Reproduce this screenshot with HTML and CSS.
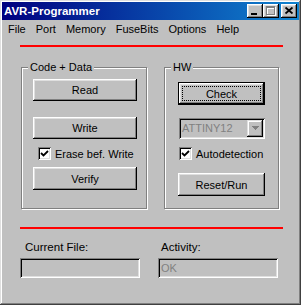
FILE: index.html
```html
<!DOCTYPE html>
<html lang="en">

<head>
    <meta charset="UTF-8">
    <title>AVR-Programmer</title>
    <link rel="stylesheet" href="styles.css">
</head>

<body>
    <div class="window">
        <div class="titlebar">
            <span class="title">AVR-Programmer</span>
            <div class="caption-btns">
                <span class="cbtn">
                    <svg width="16" height="14" shape-rendering="crispEdges">
                        <rect x="4" y="9" width="6" height="2" fill="#000" />
                    </svg>
                </span>
                <span class="cbtn">
                    <svg width="16" height="14" shape-rendering="crispEdges">
                        <path d="M4 3h9v9h-9z M5 5h7v6h-7z" fill="#fff" fill-rule="evenodd" />
                        <path d="M3 2h9v9h-9z M4 4h7v6h-7z" fill="#808080" fill-rule="evenodd" />
                    </svg>
                </span>
                <span class="cbtn close">
                    <svg width="16" height="14">
                        <path d="M4.5 3.5 L11.5 9.5 M11.5 3.5 L4.5 9.5" stroke="#000" stroke-width="1.7" />
                    </svg>
                </span>
            </div>
        </div>

        <div class="menubar">
            <span>File</span>
            <span>Port</span>
            <span>Memory</span>
            <span>FuseBits</span>
            <span>Options</span>
            <span>Help</span>
        </div>

        <div class="client">
            <div class="redline"></div>

            <div class="groups">
                <div class="group code">
                    <span class="legend">Code + Data</span>
                    <button class="btn">Read</button>
                    <button class="btn write">Write</button>
                    <label class="check erase"><span class="box"><svg width="9" height="9">
                                <path d="M1 4 L3.5 6.5 L8 2" stroke="#000" stroke-width="1.8" fill="none" />
                            </svg></span>Erase bef. Write</label>
                    <button class="btn verify">Verify</button>
                </div>

                <div class="group hw">
                    <span class="legend">HW</span>
                    <button class="btn default">Check</button>
                    <div class="combo">
                        <span class="combo-text">ATTINY12</span>
                        <span class="combo-arrow"><svg width="7" height="5" shape-rendering="crispEdges">
                                <path d="M1 1h5v1h-1v1h-1v1h-1v-1h-1v-1h-1z" fill="#fff" />
                                <path d="M0 0h7v1h-1v1h-1v1h-1v1h-1v-1h-1v-1h-1v-1h-1z" fill="#808080" />
                            </svg></span>
                    </div>
                    <label class="check auto"><span class="box"><svg width="9" height="9">
                                <path d="M1 4 L3.5 6.5 L8 2" stroke="#000" stroke-width="1.8" fill="none" />
                            </svg></span>Autodetection</label>
                    <button class="btn reset">Reset/Run</button>
                </div>
            </div>

            <div class="redline second"></div>

            <div class="fields">
                <div class="field">
                    <span class="field-label cur">Current File:</span>
                    <div class="edit"></div>
                </div>
                <div class="field activity">
                    <span class="field-label act">Activity:</span>
                    <div class="edit">OK</div>
                </div>
            </div>
        </div>
    </div>
</body>

</html>
```

FILE: styles.css
```css
body {
    margin: 0;
    font-family: "Liberation Sans", Arial, sans-serif;
    font-size: 11px;
    color: #000;
}

.window {
    width: 301px;
    height: 305px;
    box-sizing: border-box;
    padding: 2px;
    background-color: #c0c0c0;
    box-shadow: inset -1px -1px #404040, inset 1px 1px #dfdfdf, inset -2px -2px #808080, inset 2px 2px #fff;
    display: flex;
    flex-direction: column;
}

.titlebar {
    height: 18px;
    padding: 0 2px;
    background: linear-gradient(90deg, #000080, #1084d0);
    display: flex;
    align-items: center;
    justify-content: space-between;
}

.title {
    color: #fff;
    font-weight: bold;
    font-size: 11.5px;
}

.caption-btns {
    display: flex;
}

.cbtn {
    width: 16px;
    height: 14px;
    background-color: #c0c0c0;
    box-shadow: inset -1px -1px #000, inset 1px 1px #fff, inset -2px -2px #808080, inset 2px 2px #dfdfdf;
}

.cbtn svg {
    display: block;
}

.close {
    margin-left: 2px;
}

.menubar {
    height: 18px;
    padding-left: 6px;
    display: flex;
    align-items: center;
    gap: 10px;
}

.client {
    flex: 1;
    padding: 7px 0 0 18px;
}

.redline {
    width: 263px;
    height: 2px;
    background-color: #ff0000;
}

.redline.second {
    margin-top: 18px;
}

.groups {
    display: flex;
    margin-top: 20px;
}

.group {
    position: relative;
    height: 142px;
    box-sizing: border-box;
    border: 1px solid #808080;
    box-shadow: inset 1px 1px #fff, 1px 1px #fff;
    display: flex;
    flex-direction: column;
    align-items: flex-start;
}

.legend {
    position: absolute;
    top: -8px;
    left: 6px;
    padding: 0 2px;
    line-height: 14px;
    background-color: #c0c0c0;
}

.group.code {
    width: 126px;
    margin-left: 1px;
    padding: 11px 0 0 11px;
}

.group.hw {
    width: 115px;
    margin-left: 17px;
    padding: 14px 0 0 13px;
}

.btn {
    position: relative;
    width: 104px;
    height: 22px;
    padding: 0;
    border: none;
    font-family: inherit;
    font-size: 11px;
    color: #000;
    background-color: #c0c0c0;
    box-shadow: inset -1px -1px #000, inset 1px 1px #fff, inset -2px -2px #808080, inset 2px 2px #dfdfdf;
}

.btn.write {
    margin-top: 16px;
}

.btn.verify {
    margin-top: 7px;
    height: 23px;
}

.hw .btn {
    width: 87px;
    height: 23px;
}

.btn.default {
    box-shadow: inset 0 0 0 1px #000, inset -2px -2px #000, inset 2px 2px #fff, inset -3px -3px #808080, inset 3px 3px #dfdfdf;
}

.btn.default::after {
    content: "";
    position: absolute;
    top: 4px;
    left: 4px;
    right: 4px;
    bottom: 4px;
    border: 1px dotted #000;
}

.btn.reset {
    margin-top: 13px;
}

.check {
    display: flex;
    align-items: center;
    height: 13px;
    margin-top: 8px;
    gap: 4px;
}

.check.erase {
    margin-left: 5px;
}

.check.auto {
    margin-left: 1px;
}

.box {
    width: 13px;
    height: 13px;
    box-sizing: border-box;
    padding: 2px;
    background-color: #fff;
    box-shadow: inset 1px 1px #808080, inset -1px -1px #fff, inset 2px 2px #000, inset -2px -2px #dfdfdf;
}

.box svg {
    display: block;
}

.combo {
    width: 86px;
    height: 21px;
    margin: 13px 0 0 1px;
    box-sizing: border-box;
    padding: 2px;
    display: flex;
    align-items: stretch;
    box-shadow: inset 1px 1px #808080, inset -1px -1px #fff, inset 2px 2px #000, inset -2px -2px #dfdfdf;
}

.combo-text {
    flex: 1;
    padding-left: 1px;
    font-size: 11px;
    line-height: 17px;
    color: #808080;
}

.combo-arrow {
    width: 16px;
    display: flex;
    align-items: center;
    justify-content: center;
    box-shadow: inset -1px -1px #000, inset 1px 1px #dfdfdf, inset -2px -2px #808080, inset 2px 2px #fff;
}

.combo-arrow svg {
    display: block;
}

.fields {
    display: flex;
    margin-top: 12px;
}

.field {
    display: flex;
    flex-direction: column;
    width: 120px;
}

.field.activity {
    margin-left: 18px;
}

.field-label {
    line-height: 13px;
    font-size: 11.5px;
}

.field-label.cur {
    margin-left: 5px;
}

.field-label.act {
    margin-left: 3px;
}

.edit {
    height: 20px;
    margin-top: 4px;
    box-sizing: border-box;
    padding: 2px 3px;
    font-size: 11px;
    line-height: 16px;
    color: #808080;
    box-shadow: inset 1px 1px #808080, inset -1px -1px #fff, inset 2px 2px #000, inset -2px -2px #dfdfdf;
}
```
